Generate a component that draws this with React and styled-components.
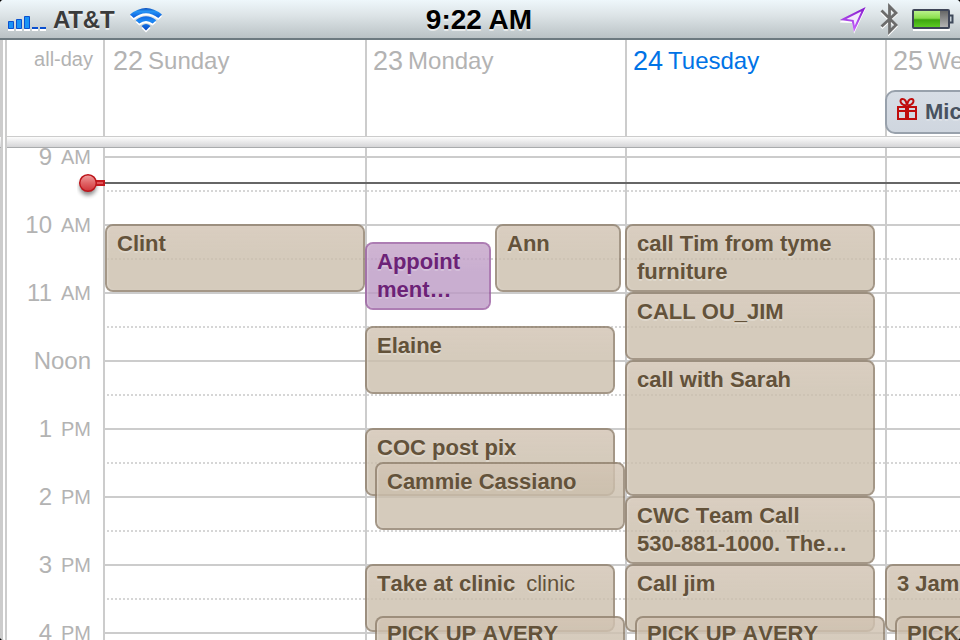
import React from 'react'
import styled, { createGlobalStyle } from 'styled-components'

const HOUR_HEIGHT = 68
const FIRST_HOUR = 9
const GRID_OFFSET = 8

const palettes = {
  tan: {
    fill: 'rgba(202, 190, 171, 0.8)',
    border: 'rgba(146, 130, 111, 0.83)',
    text: '#63523a',
    shadow: 'rgba(255, 255, 255, 0.25)'
  },
  purple: {
    fill: 'rgba(188, 154, 196, 0.8)',
    border: 'rgba(152, 92, 160, 0.8)',
    text: '#6c2277',
    shadow: 'rgba(255, 255, 255, 0.22)'
  }
}

const GlobalStyle = createGlobalStyle`
  body {
    margin: 0;
    background: #000;
    font-family: 'Liberation Sans', Arial, Helvetica, sans-serif;
  }
`

const Screen = styled.div`
  display: flex;
  flex-direction: column;
  width: 960px;
  height: 640px;
  overflow: hidden;
  border-radius: 4px;
  background: #fff;
`

const StatusBar = styled.header`
  box-sizing: border-box;
  display: grid;
  grid-template-columns: 1fr auto 1fr;
  flex-shrink: 0;
  height: 40px;
  border-bottom: 2px solid #6d7a80;
  background: linear-gradient(#eef7fb, #dde4e7 40%, #bac2c5);
  text-shadow: 0 2px 0 rgba(255, 255, 255, 0.6);
`

const StatusLeft = styled.div`
  display: flex;
  align-items: flex-start;
`

const StatusRight = styled.div`
  display: flex;
  justify-content: flex-end;
  padding-right: 5px;
`

const Carrier = styled.span`
  width: 62px;
  margin: 0 14px 0 5px;
  color: #3b3b3b;
  font-size: 24px;
  font-weight: bold;
  line-height: 40px;
  letter-spacing: -0.2px;
`

const Clock = styled.time`
  margin-left: -2px;
  color: #000;
  font-size: 28px;
  font-weight: bold;
  line-height: 39px;
`

const Icon = styled.svg`
  display: block;
  flex-shrink: 0;
  margin-left: ${props => props.$gap || 0}px;
`

const Calendar = styled.main`
  display: flex;
  flex-grow: 1;
  min-height: 0;
`

const PreviousPage = styled.div`
  flex-shrink: 0;
  width: 3px;
  margin-right: 2px;
  padding-top: 96px;
  background: #ccc;
`

const Divider = styled.div`
  box-sizing: border-box;
  flex-shrink: 0;
  width: ${props => props.$width || '100%'};
  height: 12px;
  border-top: 1px solid #ccc;
  border-bottom: 1px solid #a9abad;
  background: linear-gradient(#fcfcfc, #d5d5d7);
`

const Page = styled.div`
  display: flex;
  flex-direction: column;
  flex-grow: 1;
  min-width: 0;
  border-left: 2px solid #ccc;
`

const DayHeader = styled.div`
  display: flex;
  flex-shrink: 0;
  height: 96px;
`

const Gutter = styled.div`
  box-sizing: border-box;
  flex-shrink: 0;
  width: 98px;
  border-right: 2px solid #ccc;
  color: #b3b3b3;
  text-align: right;
`

const AllDayLabel = styled.div`
  padding-right: 10px;
  font-size: 20px;
  line-height: 39px;
`

const Day = styled.div`
  position: relative;
  flex-shrink: 0;
  width: 260px;
  box-shadow: ${props => (props.$first ? 'none' : 'inset 2px 0 #ccc')};
`

const DayTitle = styled.h2`
  display: flex;
  height: 42px;
  margin: 0;
  padding-left: 8px;
  color: ${props => (props.$today ? '#0073e6' : '#b3b3b3')};
  font-size: 24px;
  font-weight: normal;
  line-height: 42px;
  white-space: nowrap;
`

const DayNumber = styled.span`
  margin-right: 5px;
  font-size: 27px;
`

const AllDayEvent = styled.div`
  box-sizing: border-box;
  display: flex;
  height: 44px;
  margin-top: 8px;
  padding-left: 9px;
  border: 2px solid #98a1ac;
  border-radius: 10px;
  background: linear-gradient(#d7dde5, #cfd6df);
  color: #485260;
  font-size: 22px;
  font-weight: bold;
  line-height: 39px;
  text-shadow: 0 2px 0 rgba(255, 255, 255, 0.25);
`

const AllDayTitle = styled.span`
  margin-left: 7px;
`

const Grid = styled.div`
  position: relative;
  display: flex;
  flex-grow: 1;
  min-height: 0;
  overflow: hidden;
`

const TimeLabel = styled.div`
  box-sizing: border-box;
  display: flex;
  justify-content: flex-end;
  height: ${HOUR_HEIGHT}px;
  padding-right: 12px;
  font-size: 24px;
  line-height: 17px;
  white-space: nowrap;
`

const Meridiem = styled.span`
  margin-left: 9px;
  font-size: 20px;
  line-height: 18px;
`

const HourCell = styled.div`
  box-sizing: border-box;
  height: ${HOUR_HEIGHT}px;
  padding: 32px 0 0 2px;
  border-top: 2px solid #ccc;
`

const HalfHour = styled.div`
  height: 2px;
  background: repeating-linear-gradient(90deg, #d6d6d6 0 2px, transparent 2px 4px);
`

const Hours = styled.div`
  padding-top: ${GRID_OFFSET}px;
`

// Events float over the hour cells and may overlap each other
const EventBox = styled.article`
  box-sizing: border-box;
  position: absolute;
  top: ${props => GRID_OFFSET + (props.$start - FIRST_HOUR) * HOUR_HEIGHT}px;
  left: ${props => props.$left}px;
  width: ${props => props.$width}px;
  height: ${props => props.$hours * HOUR_HEIGHT}px;
  padding: ${props => (props.$compact ? 2 : 4)}px 10px 2px;
  overflow: hidden;
  border: 2px solid ${props => palettes[props.$color].border};
  border-radius: 8px;
  background: linear-gradient(rgba(255, 225, 225, 0.12), transparent 28px)
      padding-box,
    ${props => palettes[props.$color].fill} padding-box;
  box-shadow: inset 2px 0 2px -1px rgba(255, 255, 255, 0.3);
  color: ${props => palettes[props.$color].text};
  font-size: 22px;
  font-kerning: none;
  line-height: 28px;
  text-shadow: 0 2px 0 ${props => palettes[props.$color].shadow};
  white-space: nowrap;
`

const EventTitle = styled.div`
  font-weight: bold;
`

const EventPlace = styled.span`
  margin-left: 11px;
  font-weight: normal;
`

const NowMarker = styled.div`
  position: absolute;
  top: 24px;
  left: 70px;
  right: 0;
  display: flex;
`

const NowLine = styled.div`
  flex-grow: 1;
  height: 2px;
  margin-top: 10px;
  background: #666;
`

const hours = [
  ['9', 'AM'],
  ['10', 'AM'],
  ['11', 'AM'],
  ['Noon'],
  ['1', 'PM'],
  ['2', 'PM'],
  ['3', 'PM'],
  ['4', 'PM']
]

const minutes = px => px / HOUR_HEIGHT

const pickUp = {
  lines: ['PICK UP AVERY'],
  start: 15 + minutes(52),
  left: 10,
  compact: true
}

const days = [
  {
    number: 22,
    name: 'Sunday',
    events: [{ lines: ['Clint'], start: 10, width: 260 }]
  },
  {
    number: 23,
    name: 'Monday',
    events: [
      {
        lines: ['Appoint', 'ment…'],
        start: 10 + minutes(18),
        width: 126,
        color: 'purple'
      },
      { lines: ['Ann'], start: 10, left: 130, width: 126 },
      { lines: ['Elaine'], start: 11.5 },
      { lines: ['COC post pix'], start: 13 },
      { lines: ['Cammie Cassiano'], start: 13.5, left: 10 },
      { lines: ['Take at clinic'], place: 'clinic', start: 15 },
      pickUp
    ]
  },
  {
    number: 24,
    name: 'Tuesday',
    today: true,
    events: [
      { lines: ['call Tim from tyme', 'furniture'], start: 10 },
      { lines: ['CALL OU_JIM'], start: 11 },
      { lines: ['call with Sarah'], start: 12, hours: 2 },
      { lines: ['CWC Team Call', '530-881-1000. The…'], start: 14 },
      { lines: ['Call jim'], start: 15 },
      pickUp
    ]
  },
  {
    number: 25,
    name: 'Wednesday',
    allDay: 'Mic',
    events: [{ lines: ['3 Jam'], start: 15 }, pickUp]
  }
]

const SignalIcon = () => (
  <Icon width="40" height="38" $gap={8}>
    <path
      d="M0 30h6M8 30h6M16 30h6M24 30h6M32 30h6"
      stroke="#fff"
      strokeWidth="2"
    />
    <path
      d="M.5 21.5h5v7h-5zM8.5 19.5h5v9h-5zM16.500 16.500h5v12h-5z"
      fill="#1a93f5"
      stroke="#0b50cf"
    />
    <path d="M24 27h6v2h-6zM32 27h6v2h-6z" fill="#0b50cf" />
  </Icon>
)

const WifiIcon = () => (
  <Icon width="34" height="38" viewBox="129 0 34 38">
    <defs>
      <linearGradient id="wifi" x1="0" y1="8" x2="0" y2="30" gradientUnits="userSpaceOnUse">
        <stop offset="0" stopColor="#0a49b8" />
        <stop offset="0.15" stopColor="#2795f5" />
        <stop offset="0.38" stopColor="#1168e2" />
        <stop offset="0.6" stopColor="#1c88f4" />
        <stop offset="1" stopColor="#0647c4" />
      </linearGradient>
    </defs>
    <g transform="translate(0 2)" fill="#fff">
      <path d="M130 14.500Q146 1.500 162 14.500L158.300 18Q146 8.500 133.700 18Z" />
      <path d="M135.700 20.300Q146 12 156.300 20.300L152.700 23.600Q146 18.500 139.300 23.600Z" />
      <path d="M141.500 26Q146 22 150.500 26L146 30.500Z" />
    </g>
    <g fill="url(#wifi)">
      <path d="M130 14.500Q146 1.500 162 14.500L158.300 18Q146 8.500 133.700 18Z" />
      <path d="M135.700 20.300Q146 12 156.300 20.300L152.700 23.600Q146 18.500 139.300 23.600Z" />
      <path d="M141.500 26Q146 22 150.500 26L146 30.500Z" />
    </g>
  </Icon>
)

const LocationIcon = () => (
  <Icon width="27" height="38" viewBox="840 0 27 38">
    <defs>
      <linearGradient id="arrow" x1="0" y1="0" x2="0" y2="1">
        <stop offset="0" stopColor="#8a1fd0" />
        <stop offset="1" stopColor="#c463fa" />
      </linearGradient>
    </defs>
    <path d="M842.500 21.500L863.500 11L854.500 30.500L853 22Z" fill="none" stroke="#fff" strokeWidth="2" />
    <path
      d="M843 19.500L863.500 9.200L854.300 29L852.800 20.800Z"
      fill="#f2eafc"
      stroke="url(#arrow)"
      strokeWidth="2"
    />
  </Icon>
)

const BluetoothIcon = () => (
  <Icon width="20" height="38" viewBox="879 0 20 38" $gap={12}>
    <path
      d="M881.500 12L896 26.500L889.500 33V8L896 14L881.500 28"
      fill="none"
      stroke="#fff"
      strokeWidth="2.800"
    />
    <path
      d="M881.500 10.500L896 25L889.500 31.500V6.500L896 13L881.500 26.500"
      fill="none"
      stroke="#6c6c6c"
      strokeWidth="2.800"
    />
  </Icon>
)

const BatteryIcon = () => (
  <Icon width="44" height="38" viewBox="911 0 44 38" $gap={12}>
    <defs>
      <linearGradient id="charge" x1="0" y1="0" x2="0" y2="1">
        <stop offset="0" stopColor="#b9f08a" />
        <stop offset="0.45" stopColor="#8ade4c" />
        <stop offset="0.55" stopColor="#3da50e" />
        <stop offset="1" stopColor="#5ccb22" />
      </linearGradient>
      <linearGradient id="drained" x1="0" y1="0" x2="0" y2="1">
        <stop offset="0" stopColor="#626262" />
        <stop offset="1" stopColor="#b8b8b8" />
      </linearGradient>
    </defs>
    <path d="M913 30h37" stroke="#fff" strokeWidth="2" />
    <path d="M950 15.500h2.500v7H950" fill="#c6d0d6" stroke="#3e495a" strokeWidth="2" />
    <rect x="913" y="10" width="36" height="18" rx="1" fill="url(#drained)" />
    <rect x="914" y="11" width="26" height="16" fill="url(#charge)" />
    <rect x="913" y="10" width="36" height="18" rx="1" fill="none" stroke="#3e4558" strokeWidth="2" />
  </Icon>
)

const GiftIcon = () => (
  <Icon width="22" height="40" viewBox="896 92 22 40">
    <g fill="none" stroke="#c00d0d" strokeWidth="2">
      <path d="M898 107h18v4h-18zM898 111h18v8h-18z" />
      <path d="M907 106v13" strokeWidth="4" />
      <path d="M906.500 105.500C900 105 899 99 902.500 99C905 99 906.500 102 907 105.500C907.500 102 909 99 911.500 99C915 99 914 105 907.500 105.500" />
    </g>
  </Icon>
)

const NowPin = () => (
  <Icon width="28" height="36" viewBox="77 172 28 36">
    <defs>
      <linearGradient id="pin" x1="0" y1="0" x2="0" y2="1">
        <stop offset="0" stopColor="#f0a0a0" />
        <stop offset="0.5" stopColor="#e06466" />
        <stop offset="1" stopColor="#cf3338" />
      </linearGradient>
      <filter id="pin-shadow" x="-50%" y="-50%" width="200%" height="200%">
        <feGaussianBlur stdDeviation="2" />
      </filter>
    </defs>
    <circle cx="88" cy="187" r="8.500" fill="#000" opacity="0.45" filter="url(#pin-shadow)" />
    <path d="M96 180h9v6h-9z" fill="#c21a20" />
    <path d="M95 182h8v2h-8z" fill="#e0575b" />
    <circle cx="88" cy="183" r="8.300" fill="url(#pin)" stroke="#bd161c" strokeWidth="1.500" />
  </Icon>
)

const Event = ({
  lines,
  place,
  start,
  hours: length = 1,
  left = 0,
  width = 250,
  color = 'tan',
  compact = false
}) => (
  <EventBox
    $start={start}
    $hours={length}
    $left={left}
    $width={width}
    $color={color}
    $compact={compact}
  >
    {lines.map(line => (
      <EventTitle key={line}>
        {line}
        {!!place && <EventPlace>{place}</EventPlace>}
      </EventTitle>
    ))}
  </EventBox>
)

const App = () => (
  <>
    <GlobalStyle />
    <Screen>
      <StatusBar>
        <StatusLeft>
          <SignalIcon />
          <Carrier>AT&amp;T</Carrier>
          <WifiIcon />
        </StatusLeft>
        <Clock>9:22 AM</Clock>
        <StatusRight>
          <LocationIcon />
          <BluetoothIcon />
          <BatteryIcon />
        </StatusRight>
      </StatusBar>
      <Calendar>
        <PreviousPage>
          <Divider $width="1px" />
        </PreviousPage>
        <Page>
          <DayHeader>
            <Gutter>
              <AllDayLabel>all-day</AllDayLabel>
            </Gutter>
            {days.map((day, index) => (
              <Day key={day.number} $first={index === 0}>
                <DayTitle $today={day.today}>
                  <DayNumber>{day.number}</DayNumber>
                  {day.name}
                </DayTitle>
                {!!day.allDay && (
                  <AllDayEvent>
                    <GiftIcon />
                    <AllDayTitle>{day.allDay}</AllDayTitle>
                  </AllDayEvent>
                )}
              </Day>
            ))}
          </DayHeader>
          <Divider />
          <Grid>
            <Gutter>
              {hours.map(([hour, meridiem]) => (
                <TimeLabel key={hour}>
                  {hour}
                  {!!meridiem && <Meridiem>{meridiem}</Meridiem>}
                </TimeLabel>
              ))}
            </Gutter>
            {days.map((day, index) => (
              <Day key={day.number} $first={index === 0}>
                <Hours>
                  {hours.map(([hour]) => (
                    <HourCell key={hour}>
                      <HalfHour />
                    </HourCell>
                  ))}
                </Hours>
                {day.events.map(event => (
                  <Event key={event.lines[0]} {...event} />
                ))}
              </Day>
            ))}
            <NowMarker>
              <NowPin />
              <NowLine />
            </NowMarker>
          </Grid>
        </Page>
      </Calendar>
    </Screen>
  </>
)

export default App
